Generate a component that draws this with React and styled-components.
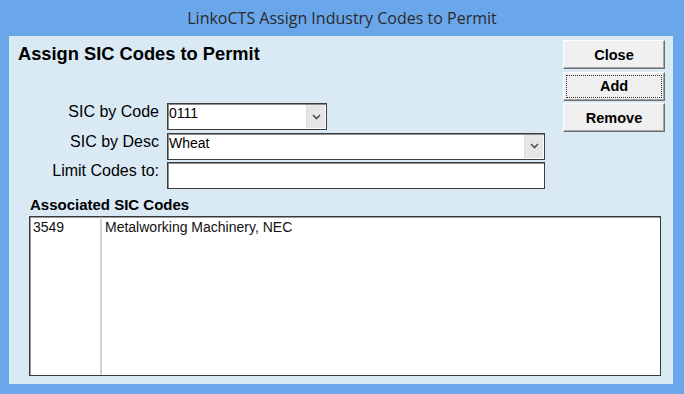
import React from "react";
import styled, { createGlobalStyle } from "styled-components";

const GlobalStyle = createGlobalStyle`
  html, body { margin: 0; padding: 0; }
  body { width: 684px; height: 394px; overflow: hidden; background: #6aa7ea; }
`;

const Window = styled.div`
  width: 684px;
  height: 394px;
  display: flex;
  flex-direction: column;
  background: #6aa7ea;
  font-family: "Liberation Sans", Arial, sans-serif;
  color: #000;
`;

const TitleBar = styled.div`
  height: 36px;
  flex: none;
  display: flex;
  align-items: center;
  justify-content: center;
  font-family: "Open Sans", "Noto Sans", sans-serif;
  font-size: 16px;
  color: #2a2a2a;
`;

const Client = styled.div`
  flex: 1;
  margin: 0 11px 10px 9px;
  background: #d9eaf5;
  display: flex;
  flex-direction: column;
  padding: 4px 8px 8px 9px;
  min-height: 0;
`;

const Top = styled.div`
  display: flex;
  justify-content: space-between;
  align-items: flex-start;
`;

const LeftPane = styled.div`
  display: flex;
  flex-direction: column;
`;

const Heading = styled.h1`
  margin: 3px 0 0;
  font-size: 18.3px;
  line-height: 22px;
  font-weight: bold;
`;

const Form = styled.div`
  margin-top: 38px;
  display: grid;
  grid-template-columns: 141px auto;
  column-gap: 8px;
  row-gap: 2.5px;
`;

const Label = styled.div`
  text-align: right;
  font-size: 16px;
  line-height: 18px;
`;

const Field = styled.div`
  width: ${(p) => p.$width}px;
  height: 27px;
  box-sizing: border-box;
  border: 1px solid #3d3d3d;
  background: #fff;
  box-shadow: inset 1px 1px 0 #8c8c8c;
  display: flex;
  align-items: stretch;
`;

const FieldText = styled.span`
  flex: 1;
  padding: 1px 0 0 1px;
  font-size: 14px;
  line-height: 16px;
`;

const DropButton = styled.span`
  width: 18px;
  margin: 1px;
  background: #e6e6e6;
  border-left: 1px solid #dcdcdc;
  display: flex;
  align-items: center;
  justify-content: center;
`;

const ButtonColumn = styled.div`
  display: flex;
  flex-direction: column;
  gap: 2.5px;
  width: 102px;
`;

const Button = styled.button`
  height: 29px;
  box-sizing: border-box;
  background: #f0f0f0;
  border: 1px solid;
  border-color: #fff #6d6d6d #6d6d6d #fff;
  box-shadow: inset -1px -1px 0 #a8a8a8;
  font-family: "Liberation Sans", Arial, sans-serif;
  font-weight: bold;
  font-size: 14.5px;
  color: #000;
  padding: 0;
  outline: ${(p) => (p.$focused ? "1px dotted #333" : "none")};
  outline-offset: -4px;
`;

const ListLabel = styled.div`
  margin: 7px 0 0 12px;
  font-size: 15px;
  line-height: 17px;
  font-weight: bold;
`;

const List = styled.div`
  flex: 1;
  margin: 3px 4px 0 11px;
  border: 1px solid #3a3a3a;
  box-shadow: inset 1px 1px 0 #9a9a9a;
  background: #fff;
  display: flex;
`;

const Column = styled.div`
  width: ${(p) => (p.$width ? `${p.$width}px` : "auto")};
  flex: ${(p) => (p.$width ? "none" : 1)};
  border-right: ${(p) => (p.$divider ? "2px solid #d2d2d2" : "none")};
`;

const Cell = styled.div`
  padding: 2px 3px 0;
  font-size: 14px;
  line-height: 16px;
  color: #111;
`;

const Chevron = () => (
  <svg width="9" height="6" viewBox="0 0 9 6">
    <path d="M1 1 L4.5 4.5 L8 1" fill="none" stroke="#505050" strokeWidth="1.6" />
  </svg>
);

const rows = [{ code: "3549", desc: "Metalworking Machinery, NEC" }];

export default function App() {
  return (
    <Window>
      <GlobalStyle />
      <TitleBar>LinkoCTS Assign Industry Codes to Permit</TitleBar>
      <Client>
        <Top>
          <LeftPane>
            <Heading>Assign SIC Codes to Permit</Heading>
            <Form>
              <Label>SIC by Code</Label>
              <Field $width={160}>
                <FieldText>0111</FieldText>
                <DropButton><Chevron /></DropButton>
              </Field>
              <Label>SIC by Desc</Label>
              <Field $width={378}>
                <FieldText>Wheat</FieldText>
                <DropButton><Chevron /></DropButton>
              </Field>
              <Label>Limit Codes to:</Label>
              <Field $width={378}>
                <FieldText />
              </Field>
            </Form>
          </LeftPane>
          <ButtonColumn>
            <Button>Close</Button>
            <Button $focused>Add</Button>
            <Button>Remove</Button>
          </ButtonColumn>
        </Top>
        <ListLabel>Associated SIC Codes</ListLabel>
        <List>
          <Column $width={70} $divider>
            {rows.map((r) => <Cell key={r.code}>{r.code}</Cell>)}
          </Column>
          <Column>
            {rows.map((r) => <Cell key={r.code}>{r.desc}</Cell>)}
          </Column>
        </List>
      </Client>
    </Window>
  );
}
